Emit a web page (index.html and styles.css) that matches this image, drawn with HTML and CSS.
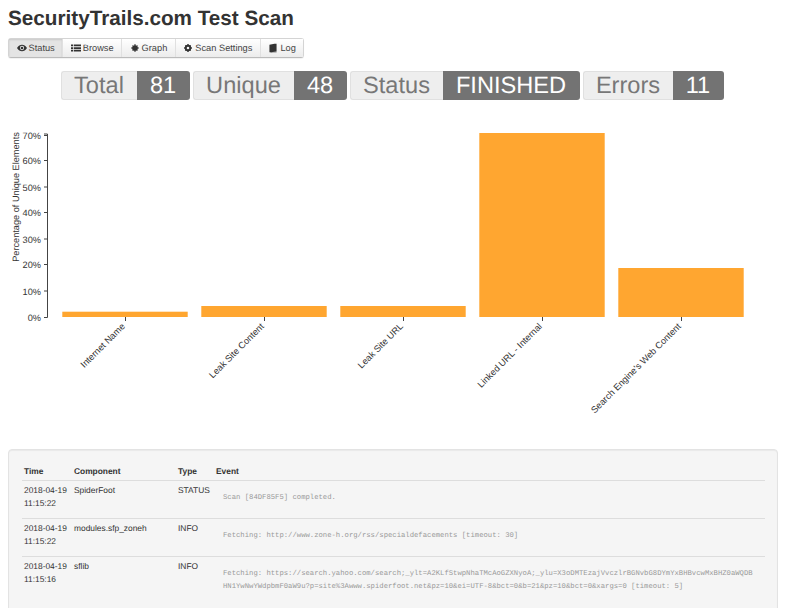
FILE: index.html
```html
<!DOCTYPE html>
<html lang="en">
<head>
  <meta charset="UTF-8">
  <title>SecurityTrails.com Test Scan</title>
  <link rel="stylesheet" href="styles.css">
</head>
<body>
  <h1 class="title">SecurityTrails.com Test Scan</h1>

  <div class="tabs">
    <button class="tab active">
      <svg class="icon" viewBox="0 0 14 14"><path fill-rule="evenodd" d="M0 7C2 3.6 4.400 2.500 7 2.500S12 3.600 14 7c-2 3.400-4.400 4.500-7 4.500S2 10.400 0 7zM7 4a3 3 0 1 0 0 6 3 3 0 0 0 0-6z"/><circle cx="7" cy="7" r="1.800"/></svg>Status
    </button>
    <button class="tab">
      <svg class="icon" viewBox="0 0 14 14"><path d="M0 2h3v2.500H0zM4 2h10v2.500H4zM0 5.800h3v2.500H0zM4 5.800h10v2.500H4zM0 9.500h3V12H0zM4 9.500h10V12H4z"/></svg>Browse
    </button>
    <button class="tab">
      <svg class="icon" viewBox="0 0 14 14"><circle cx="7" cy="7" r="4"/><path d="M6.300 1.500h1.400v11H6.300zM1.500 6.300h11v1.400h-11z"/><path d="M3 4L4 3l7 7-1 1zM10 3l1 1-7 7-1-1z"/></svg>Graph
    </button>
    <button class="tab">
      <svg class="icon" viewBox="0 0 14 14"><path fill-rule="evenodd" d="M7 2.500a4.500 4.500 0 1 0 0 9 4.500 4.500 0 0 0 0-9zM7 5.200a1.800 1.800 0 1 1 0 3.600 1.800 1.800 0 0 1 0-3.600z"/><path d="M6 1.500h2v2H6zM6 10.500h2v2H6zM1.500 6h2v2h-2zM10.500 6h2v2h-2zM2.700 4L4 2.700l1.200 1.200L3.900 5.200zM8.800 10.100l1.300-1.300 1.200 1.200-1.300 1.300zM10 2.700L11.300 4l-1.200 1.200-1.300-1.300zM3.900 8.800l1.300 1.300L4 11.300 2.700 10z"/></svg>Scan Settings
    </button>
    <button class="tab">
      <svg class="icon" viewBox="0 0 14 14"><path d="M2 2.500L9 1h3v10.500L5 13H2z"/><path d="M3.500 13h8.500v-1H3.500z"/></svg>Log
    </button>
  </div>

  <div class="stats">
    <div class="stat"><span class="stat_label">Total</span><span class="stat_value stat_total">81</span></div>
    <div class="stat"><span class="stat_label">Unique</span><span class="stat_value stat_unique">48</span></div>
    <div class="stat"><span class="stat_label">Status</span><span class="stat_value stat_state">FINISHED</span></div>
    <div class="stat"><span class="stat_label">Errors</span><span class="stat_value stat_errors">11</span></div>
  </div>

  <svg class="chart" width="773" height="339" viewBox="0 0 773 339">
    <!-- svg origin is page 8,110 -->
    <g class="bars">
      <rect x="54.300" y="201.700" width="125.400" height="5.300"/>
      <rect x="193.300" y="196" width="125.400" height="11"/>
      <rect x="332.300" y="196" width="125.400" height="11"/>
      <rect x="471.300" y="23" width="125.400" height="184"/>
      <rect x="610.300" y="158" width="125.400" height="49"/>
    </g>
    <path class="axis" d="M36 24H39.500V207.500H36M36 25.500h3.500M36 50.500h3.500M36 77h3.500M36 102.500h3.500M36 129h3.500M36 154.500h3.500M36 181h3.500"/>
    <path class="axis" d="M117.500 207v4M256.500 207v4M395.500 207v4M534.500 207v4M673.500 207v4"/>
    <g class="y_labels">
      <text x="33" y="28.500">70%</text>
      <text x="33" y="54.200">60%</text>
      <text x="33" y="80.500">50%</text>
      <text x="33" y="106.200">40%</text>
      <text x="33" y="132.500">30%</text>
      <text x="33" y="158.200">20%</text>
      <text x="33" y="184.500">10%</text>
      <text x="33" y="210.500">0%</text>
    </g>
    <text class="y_title" transform="translate(11 87) rotate(-90)">Percentage of Unique Elements</text>
    <g class="x_labels">
      <text transform="translate(117.500 217) rotate(-45)">Internet Name</text>
      <text transform="translate(256.500 217) rotate(-45)">Leak Site Content</text>
      <text transform="translate(395.500 217) rotate(-45)">Leak Site URL</text>
      <text transform="translate(534.500 217) rotate(-45)">Linked URL - Internal</text>
      <text transform="translate(673.500 217) rotate(-45)">Search Engine's Web Content</text>
    </g>
  </svg>

  <div class="well">
    <table class="log">
      <thead>
        <tr><th class="col_time">Time</th><th class="col_comp">Component</th><th class="col_type">Type</th><th>Event</th></tr>
      </thead>
      <tbody>
        <tr>
          <td>2018-04-19 11:15:22</td><td>SpiderFoot</td><td>STATUS</td>
          <td><div class="event">Scan [84DF85F5] completed.</div></td>
        </tr>
        <tr>
          <td>2018-04-19 11:15:22</td><td>modules.sfp_zoneh</td><td>INFO</td>
          <td><div class="event">Fetching: http://www.zone-h.org/rss/specialdefacements [timeout: 30]</div></td>
        </tr>
        <tr>
          <td>2018-04-19 11:15:16</td><td>sflib</td><td>INFO</td>
          <td><div class="event">Fetching: https://search.yahoo.com/search;_ylt=A2KLfStwpNhaTMcAoGZXNyoA;_ylu=X3oDMTEzajVvczlrBGNvbG8DYmYxBHBvcwMxBHZ0aWQDB<br>HN1YwNwYWdpbmF0aW9u?p=site%3Awww.spiderfoot.net&amp;pz=10&amp;ei=UTF-8&amp;bct=0&amp;b=21&amp;pz=10&amp;bct=0&amp;xargs=0 [timeout: 5]</div></td>
        </tr>
      </tbody>
    </table>
  </div>
</body>
</html>
```

FILE: styles.css
```css
html {
  overflow: hidden;
}

body {
  margin: 0;
  padding: 0 8px;
  background-color: #fff;
  color: #333;
  font-family: "Liberation Sans", Arial, sans-serif;
  font-size: 8.400px;
  line-height: 13px;
  text-rendering: geometricPrecision;
}

.title {
  margin: 0;
  padding-top: 8px;
  height: 30px;
  font-size: 20.700px;
  line-height: 22px;
  font-weight: bold;
  color: #333;
}

.tabs {
  display: flex;
  width: max-content;
  height: 18px;
  border: 1px solid #d4d4d4;
  border-bottom-color: #bbb;
  border-radius: 3px;
  box-shadow: 0 1px 1px rgba(0, 0, 0, 0.06);
}

.tab {
  display: flex;
  align-items: center;
  gap: 2px;
  padding: 0 7.500px;
  border: 0;
  border-left: 1px solid #e0e0e0;
  background-color: #f5f5f5;
  background-image: linear-gradient(#fff, #ececec);
  color: #444;
  font-family: inherit;
  font-size: 9.250px;
  text-rendering: inherit;
}

.tab:first-child {
  border-left: 0;
}

.tab.active {
  background-image: none;
  background-color: #e4e4e4;
  box-shadow: inset 0 1px 2px rgba(0, 0, 0, 0.12);
}

.icon {
  width: 10px;
  height: 10px;
  fill: #333;
}

.stats {
  display: flex;
  justify-content: center;
  gap: 3px;
  margin-top: 13px;
  padding-right: 5px;
}

.stat {
  display: flex;
  height: 29px;
  font-size: 23.600px;
  line-height: 30px;
}

.stat_label {
  display: block;
  box-sizing: border-box;
  text-align: center;
  background-color: #eee;
  border: 1px solid #e0e0e0;
  border-right: 0;
  border-radius: 3px 0 0 3px;
  color: #777;
  line-height: 28px;
}

.stat_value {
  display: block;
  text-align: center;
  background-color: #737373;
  color: #fff;
  border-radius: 0 3px 3px 0;
}

.stat:nth-child(1) .stat_label { width: 76px; }
.stat:nth-child(2) .stat_label { width: 101px; }
.stat:nth-child(3) .stat_label { width: 93px; }
.stat:nth-child(4) .stat_label { width: 90px; }

.stat_total { width: 53px; }
.stat_unique { width: 53px; }
.stat_state { width: 137px; }
.stat_errors { width: 51px; }

.chart {
  display: block;
  margin-top: 10px;
}

.bars rect {
  fill: #ffa630;
}

.axis {
  fill: none;
  stroke: #444;
  stroke-width: 1;
}

.chart text {
  font-family: "Liberation Sans", Arial, sans-serif;
  font-size: 9.200px;
  fill: #333;
}

.y_labels text,
.x_labels text {
  text-anchor: end;
}

.chart .y_title {
  text-anchor: middle;
}

.well {
  box-sizing: border-box;
  width: 770px;
  min-height: 300px;
  padding: 15px 13px 19px;
  background-color: #f5f5f5;
  border: 1px solid #e3e3e3;
  border-radius: 4px;
  box-shadow: inset 0 1px 1px rgba(0, 0, 0, 0.05);
}

.log {
  width: 743px;
  border-collapse: collapse;
  table-layout: fixed;
}

.log th {
  padding: 0 2px 2px;
  text-align: left;
  font-weight: bold;
  border-bottom: 1px solid #ddd;
}

.log td {
  vertical-align: top;
  padding: 3px 2px 8px;
  border-bottom: 1px solid #ddd;
}

.log tbody tr:last-child td {
  border-bottom: 0;
}

.col_time { width: 46px; }
.col_comp { width: 100px; }
.col_type { width: 34px; }

.event {
  padding: 8px 0 0 7px;
  font-family: "Liberation Mono", "Courier New", monospace;
  font-size: 7.240px;
  color: #999;
}
```
